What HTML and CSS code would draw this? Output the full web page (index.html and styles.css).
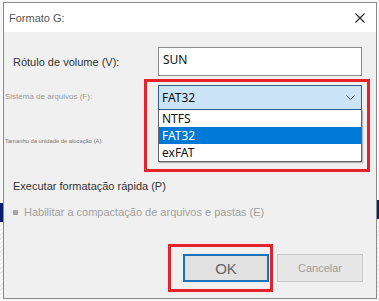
FILE: index.html
```html
<!DOCTYPE html>
<html lang="pt">
<head>
    <meta charset="UTF-8">
    <meta name="viewport" content="width=device-width, initial-scale=1.0">
    <title>Formato G:</title>
    <link rel="stylesheet" href="styles.css">
</head>
<body>
    <div class="dialog">
        <div class="titlebar">
            <span class="title">Formato G:</span>
            <svg class="close" width="10" height="10" viewBox="0 0 10 10">
                <path d="M0.5 0.5 L9.5 9.5 M9.5 0.5 L0.5 9.5" stroke="#222" stroke-width="1.1" fill="none"/>
            </svg>
        </div>

        <div class="content">
            <div class="row">
                <label class="label" for="volume">Rótulo de volume (V):</label>
                <div class="textbox" id="volume">SUN</div>
            </div>

            <div class="row-combo">
                <div class="small-labels">
                    <span class="small-label">Sistema de arquivos (F):</span>
                    <span class="tiny-label">Tamanho da unidade de alocação (A):</span>
                </div>
                <div class="highlight">
                    <div class="combo">
                        <span>FAT32</span>
                        <svg class="chevron" width="9" height="5" viewBox="0 0 9 5">
                            <path d="M0.5 0.5 L4.5 4.5 L8.5 0.5" stroke="#555" stroke-width="1" fill="none"/>
                        </svg>
                    </div>
                    <ul class="options">
                        <li>NTFS</li>
                        <li class="selected">FAT32</li>
                        <li>exFAT</li>
                    </ul>
                </div>
            </div>

            <div class="option-line">Executar formatação rápida (P)</div>
            <div class="option-line disabled"><span class="square"></span>Habilitar a compactação de arquivos e pastas (E)</div>

            <div class="buttons">
                <div class="highlight-ok">
                    <button class="btn btn-ok">OK</button>
                </div>
                <button class="btn btn-cancel">Cancelar</button>
            </div>
        </div>
    </div>
</body>
</html>
```

FILE: styles.css
```css
body {
    margin: 0;
    width: 379px;
    height: 301px;
    overflow: hidden;
    padding: 2px 0 0 3px;
    box-sizing: border-box;
    font-family: "Liberation Sans", Arial, sans-serif;
    background:
        linear-gradient(#0b1d6b, #0b1d6b) 0 203px / 3px 19px no-repeat,
        linear-gradient(#0b1d6b, #0b1d6b) right 0 top 200px / 2px 19px no-repeat,
        repeating-linear-gradient(135deg, #e8e8e8 0 1px, #fafafa 1px 3px) 0 222px / 3px 80px no-repeat,
        repeating-linear-gradient(135deg, #e8e8e8 0 1px, #fafafa 1px 3px) right 0 top 219px / 2px 82px no-repeat,
        #f7f7f7;
}
.dialog {
    width: 374px;
    height: 297px;
    box-sizing: border-box;
    border: 1px solid #8a8a8a;
    display: flex;
    flex-direction: column;
    background: #f0f0f0;
}
.titlebar {
    height: 29px;
    background: #fff;
    display: flex;
    align-items: center;
    justify-content: space-between;
    padding: 0 11px 0 5px;
}
.title {
    font-size: 11px;
    color: #555;
}
.close {
    display: block;
}
.content {
    flex: 1;
    display: flex;
    flex-direction: column;
}
.row {
    margin-top: 15px;
    padding-left: 9px;
    display: flex;
    align-items: center;
}
.label {
    width: 145px;
    font-size: 11px;
    color: #333;
}
.textbox {
    width: 204px;
    height: 29px;
    box-sizing: border-box;
    background: #fff;
    border: 1px solid #8c8c8c;
    padding: 3px 0 0 4px;
    font-family: "Noto Sans", sans-serif;
    font-size: 12px;
    color: #111;
}
.row-combo {
    margin-top: 3px;
    display: flex;
}
.small-labels {
    width: 139px;
    padding-left: 1px;
    display: flex;
    flex-direction: column;
    color: #9a9a9a;
}
.small-label {
    margin-top: 12px;
    font-size: 8px;
    line-height: 12px;
}
.tiny-label {
    margin-top: 34px;
    font-size: 5.8px;
    line-height: 8px;
    color: #777;
}
.highlight {
    width: 226px;
    height: 93px;
    box-sizing: border-box;
    border: 3px solid #e3222c;
    padding: 3px 5px 0 11px;
}
.combo {
    height: 25px;
    box-sizing: border-box;
    background: #cce4f7;
    border: 1px solid #2f5f8a;
    display: flex;
    align-items: center;
    justify-content: space-between;
    padding: 0 6px 0 3px;
    font-family: "Noto Sans", sans-serif;
    font-size: 12px;
    color: #111;
}
.options {
    list-style: none;
    margin: 0;
    padding: 0;
    height: 52px;
    box-sizing: border-box;
    background: #fff;
    border: 1px solid #646464;
    border-top: none;
    box-shadow: 1px 1px 1px rgba(0, 0, 0, 0.25);
    font-family: "Noto Sans", sans-serif;
    font-size: 12px;
    color: #111;
}
.options li {
    height: 17px;
    line-height: 17px;
    padding-left: 3px;
}
.options .selected {
    background: #0078d7;
    color: #fff;
}
.option-line {
    padding-left: 9px;
    font-size: 11px;
    line-height: 14px;
    color: #333;
    margin-top: 7px;
    display: flex;
    align-items: center;
}
.option-line.disabled {
    margin-top: 12px;
    color: #a0a0a0;
}
.square {
    width: 5px;
    height: 5px;
    background: #a8a8a8;
    margin-right: 6px;
}
.buttons {
    margin-top: 25px;
    padding-right: 13px;
    display: flex;
    justify-content: flex-end;
    align-items: center;
}
.highlight-ok {
    border: 3px solid #e3222c;
    padding: 7px 1px 7px 12px;
    margin-right: 4px;
}
.btn {
    display: block;
    width: 86px;
    height: 28px;
    box-sizing: border-box;
    font-family: "Liberation Sans", Arial, sans-serif;
    padding: 0;
}
.btn-ok {
    background: #e1e1e1;
    border: 2px solid #1a72bb;
    font-size: 15px;
    color: #666;
}
.btn-cancel {
    background: #e6e6e6;
    border: 1px solid #c9c9c9;
    font-size: 11px;
    color: #9c9c9c;
}
```
